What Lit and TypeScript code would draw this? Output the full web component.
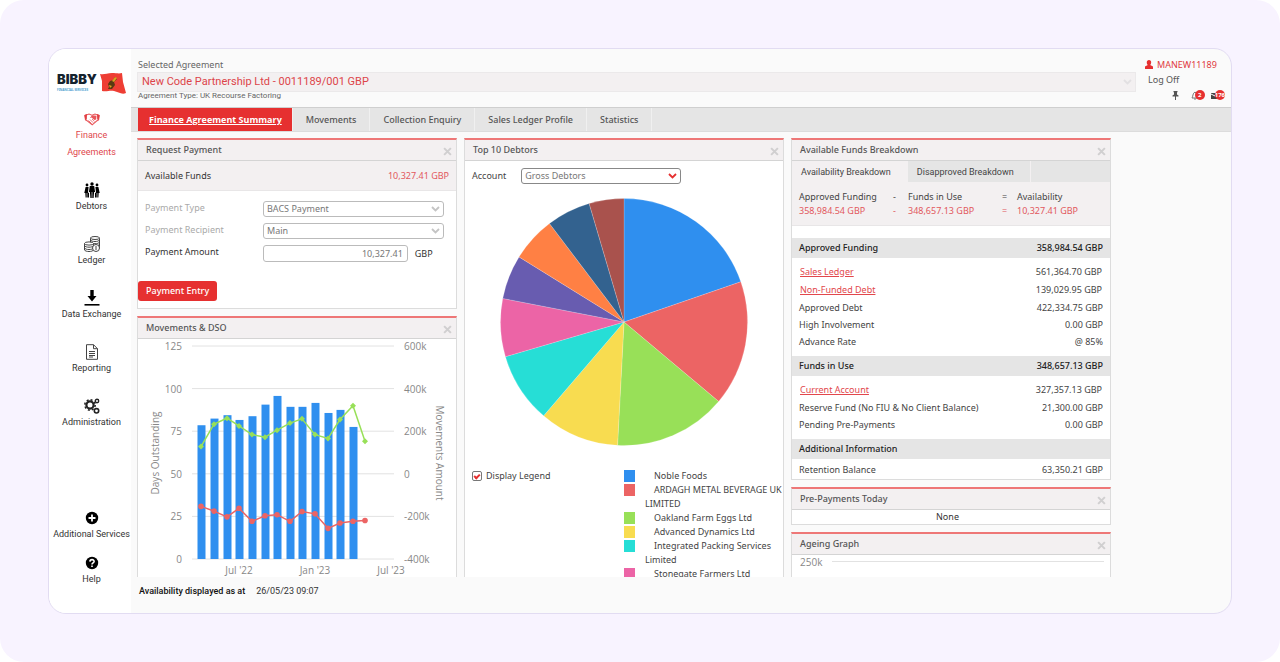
import { html, svg, css, LitElement, nothing } from 'lit'
import { customElement, property, state } from 'lit/decorators.js'
import { classMap } from 'lit/directives/class-map.js'

const icons = {
  handshake: svg`
    <path d="M.8 4.500l4.200-1.500 3 1.200L11 3l4.200 1.500-.6 4.500-2 1-4.400 3.800L3.500 10l-2-1z" fill="#fff" stroke="#e8585c" stroke-width="1.100" />
    <path d="M.5 4l2.500-1-.2 5.400-1.500.6zM15.500 4L13 3l.2 5.400 1.500.6z" fill="#e23f43" />
    <path d="M8 4.200l4.500.6-.3 3.600-1.700.6-3-2.600-1.800.8z" fill="#e8585c" />
    <path d="M4.500 9.500l3 3M6 8.500l3.200 3.200M8 8l2.500 2.300" fill="none" stroke="#e8585c" stroke-width=".8" />`,
  people: svg`
    <circle cx="3" cy="3" r="1.400" /><circle cx="8" cy="2" r="1.700" /><circle cx="13" cy="3" r="1.400" />
    <path d="M5.800 4h4.400l.9 6h-1l-.5 6H8.300V10h-.6v6H6.400l-.5-6h-1z" />
    <path d="M1.600 5h3L4 10.500l1 .5v4.500H3.300V11h-.6v4.500H1.600L1.300 11H.3z" />
    <path d="M14.400 5h-3l.6 5.500-1 .5v4.500h1.700V11h.6v4.500h1.100l.3-4.500h1z" />`,
  coins: svg`
    <g fill="#fff" stroke="#444" stroke-width="1">
      <path d="M6.500 2v10h9V2z" />
      <ellipse cx="11" cy="2" rx="4.500" ry="1.500" />
      <path d="M6.500 4c1 2 8 2 9 0M6.500 6.200c1 2 8 2 9 0M6.500 8.400c1 2 8 2 9 0" fill="none" />
      <path d="M.5 7.500V14c1 2 8 2 9 0V7.500z" />
      <ellipse cx="5" cy="7.500" rx="4.500" ry="1.600" />
      <path d="M.5 9.700c1 2 8 2 9 0M.5 12c1 2 8 2 9 0" fill="none" />
      <circle cx="12" cy="12" r="3.500" />
      <path d="M12 10v4" />
    </g>`,
  download: svg`<path d="M6.300 0h3.400v6H12.500L8 11.500 3.500 6h2.800z" /><path d="M.5 14h15v1.600H.5z" />`,
  report: svg`
    <path d="M2.500.7h7l4 4v10.600h-11zM9.500.7v4h4M5 7.500h6M5 9.500h6M5 11.500h6M5 13h4" fill="none" stroke="#444" />`,
  gears: svg`
    <g fill="none" stroke="#222">
      <circle cx="6" cy="7" r="3.600" stroke-width="2.200" />
      <circle cx="6" cy="7" r="5.200" stroke-width="1.500" stroke-dasharray="2 2.080" />
      <circle cx="13" cy="3" r="1.700" stroke-width="1.400" />
      <circle cx="12.500" cy="12.800" r="2.200" stroke-width="1.600" />
    </g>`,
  plus: svg`<circle cx="8" cy="8" r="6.200" /><path d="M8 4.500v7M4.500 8h7" stroke="#fff" stroke-width="1.800" />`,
  help: svg`
    <circle cx="8" cy="8" r="6.200" />
    <path d="M5.900 6.600C6 4 10.200 4 10.100 6.500 10 8 8 7.900 8 9.600" fill="none" stroke="#fff" stroke-width="1.600" />
    <path d="M7.200 10.600h1.600v1.500H7.200z" fill="#fff" />`
}

const mainNav = [
  { label: 'Finance Agreements', icon: icons.handshake, active: true },
  { label: 'Debtors', icon: icons.people },
  { label: 'Ledger', icon: icons.coins },
  { label: 'Data Exchange', icon: icons.download },
  { label: 'Reporting', icon: icons.report },
  { label: 'Administration', icon: icons.gears }
]

const extraNav = [
  { label: 'Additional Services', icon: icons.plus },
  { label: 'Help', icon: icons.help }
]

const tabs = ['Finance Agreement Summary', 'Movements', 'Collection Enquiry', 'Sales Ledger Profile', 'Statistics']

// end = clockwise angle where the slice stops
const debtors = [
  { name: 'Noble Foods', color: '#2f8fef', end: 71 },
  { name: 'ARDAGH METAL BEVERAGE UK LIMITED', color: '#ec6464', end: 130 },
  { name: 'Oakland Farm Eggs Ltd', color: '#98e058', end: 183 },
  { name: 'Advanced Dynamics Ltd', color: '#f8dc50', end: 220.6 },
  { name: 'Integrated Packing Services Limited', color: '#26ded6', end: 253.7 },
  { name: 'Stonegate Farmers Ltd', color: '#ec64a6', end: 281 },
  { name: '', color: '#685cb0', end: 301.8 },
  { name: '', color: '#ff8044', end: 322.9 },
  { name: '', color: '#33628f', end: 343.6 },
  { name: '', color: '#a9524d', end: 360 }
]

const months = [63, 76, 89, 101, 114, 127, 139, 152, 164, 177, 190, 202, 215, 227]
const days = [78.5, 82.4, 84.4, 81.6, 83.8, 90.6, 95.7, 89.3, 89.3, 91.6, 85.7, 87.5, 77.5]
const credits = [128, 233, 261, 225, 184, 172, 205, 238, 258, 184, 166, 255, 320, 153]
const debits = [-153, -175, -202, -162, -223, -197, -192, -223, -177, -188, -256, -231, -223, -219]

const breakdown = [
  {
    title: 'Approved Funding',
    total: '358,984.54 GBP',
    rows: [
      { label: 'Sales Ledger', value: '561,364.70 GBP', link: true },
      { label: 'Non-Funded Debt', value: '139,029.95 GBP', link: true },
      { label: 'Approved Debt', value: '422,334.75 GBP' },
      { label: 'High Involvement', value: '0.00 GBP' },
      { label: 'Advance Rate', value: '@ 85%' }
    ]
  },
  {
    title: 'Funds in Use',
    total: '348,657.13 GBP',
    rows: [
      { label: 'Current Account', value: '327,357.13 GBP', link: true },
      { label: 'Reserve Fund (No FIU & No Client Balance)', value: '21,300.00 GBP' },
      { label: 'Pending Pre-Payments', value: '0.00 GBP' }
    ]
  },
  {
    title: 'Additional Information',
    total: '',
    rows: [{ label: 'Retention Balance', value: '63,350.21 GBP' }]
  }
]

const chevron = html`
  <svg class="chevron" viewBox="0 0 9 6" aria-hidden="true">
    <path d="M1 1l3.500 3.500L8 1" fill="none" stroke="currentColor" stroke-width="1.800" />
  </svg>`

const selectStyles = css`
  .select {
    position: relative;
    display: block;
    color: #c4c4c4;
  }

  .select select {
    display: block;
    appearance: none;
    box-sizing: border-box;
    width: 100%;
    height: 16px;
    margin: 0;
    padding: 0 20px 0 3px;
    border: 1px solid #bbb;
    border-radius: 3px;
    background: #fff;
    color: #777;
    font: inherit;
    line-height: 14px;
  }

  .chevron {
    position: absolute;
    right: 4px;
    top: 5px;
    width: 9px;
    height: 6px;
    pointer-events: none;
  }
`

@customElement('dash-panel')
export class DashPanel extends LitElement {
  @property() heading = ''

  render () {
    return html`
      <section class="panel">
        <header class="panel__head">
          <h2 class="panel__title">${this.heading}</h2>
          <button class="panel__close" aria-label="Close ${this.heading}">
            <svg viewBox="0 0 8 8" width="9" height="9">
              <path d="M1 1l6 6M7 1L1 7" stroke="#d0cfd0" stroke-width="1.800" />
            </svg>
          </button>
        </header>
        <slot></slot>
      </section>
    `
  }

  static styles = css`
    :host {
      display: block;
    }

    .panel {
      background: #fff;
      border: 1px solid #dcdcdc;
      border-top: 2px solid #ee7777;
    }

    .panel__head {
      display: flex;
      justify-content: space-between;
      align-items: center;
      height: 20px;
      padding: 0 4px 0 8px;
      background: #f3f0f1;
      border-bottom: 1px solid #d4d4d4;
    }

    .panel__title {
      margin: 0;
      font-size: 9px;
      font-weight: 500;
      color: #555;
    }

    .panel__close {
      display: flex;
      padding: 2px 0 0;
      border: 0;
      background: none;
      cursor: pointer;
    }
  `
}

@customElement('side-nav')
export class SideNav extends LitElement {
  renderItem (item: any) {
    return html`
      <li>
        <a href="#" class=${classMap({ nav__a: true, 'nav__a--active': !!item.active })}>
          <svg class="nav__icon" viewBox="0 0 16 16" aria-hidden="true">${item.icon}</svg>
          <span class="nav__label">${item.label}</span>
        </a>
      </li>
    `
  }

  render () {
    return html`
      <a class="logo" href="#">
        <span class="logo__text">
          <span class="logo__name">BIBBY</span>
          <span class="logo__sub">FINANCIAL SERVICES</span>
        </span>
        <svg class="logo__flag" viewBox="0 0 28 24" aria-hidden="true">
          <path d="M1 3c4 1 7-1 12-1 4 0 7 1 10 0l1 9 3 11c-4 2-8-1-12-2-4-1-7 1-12 0L3 10z" fill="#ee3e34" />
          <path d="M16 6l2 2-3 3 1 3-3 4H9l1-2-1-3 2-3 3-1z" fill="#5a3a12" />
          <path d="M16 6l2 1-3 4-2-1zM10 14l3 1-2 2z" fill="#d9a520" />
        </svg>
      </a>
      <nav class="nav" aria-label="Main">
        <ul class="nav__ul">${mainNav.map(i => this.renderItem(i))}</ul>
        <ul class="nav__ul nav__ul--extra">${extraNav.map(i => this.renderItem(i))}</ul>
      </nav>
    `
  }

  static styles = css`
    :host {
      display: flex;
      flex-direction: column;
      box-sizing: border-box;
      padding: 22px 0 25px;
      background: #fff;
      font-family: Roboto, "Noto Sans", sans-serif;
    }

    .logo {
      display: flex;
      gap: 2px;
      padding-left: 8px;
      margin-bottom: 16px;
      text-decoration: none;
    }

    .logo__text {
      display: flex;
      flex-direction: column;
      width: 40px;
    }

    .logo__name {
      font: 900 13px/17px Inter, sans-serif;
      color: #14222e;
    }

    .logo__sub {
      font: 700 3px/4px "Noto Sans", sans-serif;
      color: #4c9fd0;
    }

    .logo__flag {
      width: 28px;
      height: 24px;
    }

    .nav {
      flex: 1;
      display: flex;
      flex-direction: column;
      justify-content: space-between;
    }

    .nav__ul {
      display: flex;
      flex-direction: column;
      gap: 21px;
      margin: 0;
      padding: 0;
      list-style: none;
    }

    .nav__ul--extra {
      gap: 12px;
    }

    .nav__a {
      display: flex;
      flex-direction: column;
      align-items: center;
      padding-left: 3px;
      color: #333;
      text-decoration: none;
    }

    .nav__a--active {
      color: #e0474c;
    }

    .nav__icon {
      width: 16px;
      height: 16px;
    }

    .nav__label {
      line-height: 17px;
      text-align: center;
    }

    .nav__a--active .nav__label {
      max-width: 60px;
    }
  `
}

@customElement('movements-chart')
export class MovementsChart extends LitElement {
  static top = 7
  static height = 213

  dayY (v: number) {
    return MovementsChart.top + MovementsChart.height * (1 - v / 125)
  }

  amountY (v: number) {
    return MovementsChart.top + MovementsChart.height * (1 - (v + 400) / 1000)
  }

  points (values: number[]) {
    return values.map((v, i) => `${months[i]},${this.amountY(v)}`).join(' ')
  }

  render () {
    return html`
      <svg class="chart" viewBox="0 0 318 250" role="img" aria-label="Movements and DSO">
        ${[125, 100, 75, 50, 25, 0].map(v => svg`
          <path class="grid" d="M54 ${this.dayY(v)}H256" />
          <text x="44" y=${this.dayY(v) + 4} text-anchor="end">${v}</text>`)}
        ${[600, 400, 200, 0, -200, -400].map(v => svg`
          <text x="266" y=${this.amountY(v) + 4}>${v === 0 ? '0' : `${v}k`}</text>`)}
        ${days.map((v, i) => svg`
          <rect x=${months[i] - 3.5} y=${this.dayY(v)} width="8" height=${this.dayY(0) - this.dayY(v)} fill="#2f8fef" />`)}
        <polyline points=${this.points(credits)} stroke="#98e058" />
        ${credits.map((v, i) => svg`
          <path transform="translate(${months[i]} ${this.amountY(v)})" d="M0-3l3 3-3 3-3-3z" fill="#98e058" />`)}
        <polyline points=${this.points(debits)} stroke="#ec6464" />
        ${debits.map((v, i) => svg`
          <circle cx=${months[i]} cy=${this.amountY(v)} r="2.800" fill="#ec6464" />`)}
        <text x="101" y="235" text-anchor="middle">Jul '22</text>
        <text x="177" y="235" text-anchor="middle">Jan '23</text>
        <text x="253" y="235" text-anchor="middle">Jul '23</text>
        <text transform="translate(21 114) rotate(-90)" text-anchor="middle">Days Outstanding</text>
        <text transform="translate(298 114) rotate(90)" text-anchor="middle">Movements Amount</text>
      </svg>
    `
  }

  static styles = css`
    :host {
      display: block;
    }

    .chart {
      display: block;
      width: 100%;
    }

    .grid {
      stroke: #e2e2e2;
    }

    polyline {
      fill: none;
      stroke-width: 1.5;
    }

    text {
      font-family: "Open Sans", "Noto Sans", sans-serif;
      font-size: 10px;
      fill: #888;
    }
  `
}

@customElement('debtors-chart')
export class DebtorsChart extends LitElement {
  @state() legend = true

  slice (start: number, end: number) {
    const at = (deg: number) => {
      const a = deg * Math.PI / 180
      return `${124 + 123.5 * Math.sin(a)} ${124 - 123.5 * Math.cos(a)}`
    }
    return `M124 124L${at(start)}A123.5 123.5 0 0 1 ${at(end)}Z`
  }

  render () {
    return html`
      <div class="account">
        <label for="account">Account</label>
        <span class="select select--account">
          <select id="account"><option>Gross Debtors</option></select>
          ${chevron}
        </span>
      </div>
      <svg class="pie" viewBox="0 0 248 248" role="img" aria-label="Top 10 debtors">
        ${debtors.map((d, i) => svg`
          <path d=${this.slice(i ? debtors[i - 1].end : 0, d.end)} fill=${d.color} stroke="#fff" stroke-opacity="0.3" stroke-width="0.6" />`)}
      </svg>
      <div class="bottom">
        <label class="check">
          <input type="checkbox" .checked=${this.legend} @change=${() => { this.legend = !this.legend }}>
          Display Legend
        </label>
        ${this.legend
          ? html`
            <ul class="legend">
              ${debtors.filter(d => d.name).map(d => html`
                <li class="legend__li">
                  <svg class="legend__key" viewBox="0 0 11 12" aria-hidden="true"><rect width="11" height="12" fill=${d.color} /></svg>
                  <span class="legend__name">${d.name}</span>
                </li>`)}
            </ul>`
          : nothing}
      </div>
    `
  }

  static styles = [selectStyles, css`
    :host {
      display: block;
      color: #444;
    }

    .account {
      display: flex;
      align-items: center;
      gap: 15px;
      padding: 7px 7px 14px;
    }

    .select--account {
      width: 160px;
      color: #e63030;
    }

    .select--account select {
      border-color: #888;
    }

    .pie {
      display: block;
      width: 78%;
      margin: 0 auto;
    }

    .bottom {
      display: grid;
      grid-template-columns: 1fr 1fr;
      padding-top: 23px;
    }

    .check {
      display: flex;
      align-items: center;
      gap: 4px;
      height: 14px;
      padding-left: 7px;
    }

    .check input {
      appearance: none;
      box-sizing: border-box;
      width: 10px;
      height: 10px;
      margin: 0;
      border: 1px solid #777;
      border-radius: 2px;
      background: #fff;
      display: grid;
      place-items: center;
    }

    .check input:checked::before {
      content: '';
      box-sizing: border-box;
      width: 6px;
      height: 4px;
      border: solid #e63030;
      border-width: 0 0 2px 2px;
      transform: rotate(-45deg);
    }

    .legend {
      margin: 0;
      padding: 0;
      list-style: none;
      line-height: 14px;
    }

    .legend__li {
      display: flex;
      gap: 10px;
    }

    .legend__key {
      flex: none;
      width: 11px;
      height: 12px;
      margin-top: 1px;
    }

    .legend__name {
      text-indent: 9px;
    }
  `]
}

@customElement('funds-breakdown')
export class FundsBreakdown extends LitElement {
  render () {
    return html`
      <div class="tabs" role="tablist">
        <button class="tabs__b tabs__b--active" role="tab" aria-selected="true">Availability Breakdown</button>
        <button class="tabs__b" role="tab" aria-selected="false">Disapproved Breakdown</button>
        <span class="tabs__rest"></span>
      </div>
      <div class="sum">
        <span>Approved Funding</span><span>-</span><span>Funds in Use</span><span>=</span><span>Availability</span>
        <span class="red">358,984.54 GBP</span><span class="red">-</span><span class="red">348,657.13 GBP</span><span class="red">=</span><span class="red">10,327.41 GBP</span>
      </div>
      ${breakdown.map(b => html`
        <table class="table">
          <thead>
            <tr><th scope="col">${b.title}</th><th scope="col">${b.total}</th></tr>
          </thead>
          <tbody>
            ${b.rows.map(r => html`
              <tr class=${classMap({ linked: !!r.link })}>
                <td>${r.link ? html`<a href="#">${r.label}</a>` : r.label}</td>
                <td>${r.value}</td>
              </tr>`)}
          </tbody>
        </table>`)}
    `
  }

  static styles = css`
    :host {
      display: block;
      color: #444;
    }

    .tabs {
      display: flex;
      background: #e5e5e5;
    }

    .tabs__b {
      padding: 0 16px 0 9px;
      height: 22px;
      border: 0;
      border-bottom: 1px solid #f3f0f1;
      border-right: 1px solid #f3f0f1;
      background: #e5e5e5;
      color: #444;
      font: 9px Roboto, "Noto Sans", sans-serif;
      cursor: pointer;
    }

    .tabs__b--active {
      background: #f3f0f1;
    }

    .tabs__rest {
      flex: 1;
      border-bottom: 1px solid #f3f0f1;
    }

    .sum {
      display: grid;
      grid-template-columns: 94px 15px 94px 15px 1fr;
      line-height: 14px;
      padding: 7px;
      background: #f3f0f1;
      border-bottom: 1px solid #e8e6e7;
      margin-bottom: 12px;
    }

    .red {
      color: #e2585d;
    }

    .table {
      width: 100%;
      border-collapse: collapse;
    }

    .table th {
      height: 20px;
      padding: 0 7px;
      background: #e5e5e5;
      color: #222;
      font-weight: 500;
      text-align: left;
    }

    .table td {
      height: 17px;
      padding: 0 7px;
    }

    .table .linked td {
      height: 18px;
      padding: 0 8px;
    }

    .table th:last-child,
    .table td:last-child {
      text-align: right;
    }

    .table tbody tr:first-child td {
      padding-top: 5px;
    }

    .table tbody tr:last-child td {
      padding-bottom: 6px;
    }

    .table:last-child tbody tr td {
      padding-top: 2px;
      padding-bottom: 1px;
    }

    a {
      color: #e2474c;
    }
  `
}

@customElement('app-root')
export class AppRoot extends LitElement {
  renderHeader () {
    return html`
      <header class="top">
        <div class="top__agreement">
          <label for="agreement">Selected Agreement</label>
          <span class="select select--agreement">
            <select id="agreement"><option>New Code Partnership Ltd - 0011189/001 GBP</option></select>
            ${chevron}
          </span>
          <span class="top__type">Agreement Type: UK Recourse Factoring</span>
        </div>
        <div class="user">
          <a class="user__name" href="#">
            <svg viewBox="0 0 8 9" width="8" height="9" aria-hidden="true">
              <path d="M4 0c3 0 2.500 4 1.200 5L8 6.500V9H0V6.500L2.800 5C1.500 4 1 0 4 0z" fill="#e63030" />
            </svg>
            MANEW11189
          </a>
          <a class="user__off" href="#">Log Off</a>
          <div class="user__tools">
            <button class="tool" aria-label="Pin">
              <svg viewBox="0 0 7 9" width="7" height="9">
                <path d="M1.500 0h4v1L5 1.500V3.500l1.500 1v1H4V9H3V5.500H.5v-1L2 3.500v-2L1.500 1z" fill="#555" />
              </svg>
            </button>
            <button class="tool" aria-label="Notifications">
              <svg viewBox="0 0 8 9" width="8" height="9">
                <path d="M1 7c1-1 .5-5 3-6 2.500 1 2 5 3 6zM3 8h2" fill="none" stroke="#777" />
              </svg>
              <span class="badge">2</span>
            </button>
            <button class="tool" aria-label="Messages">
              <svg viewBox="0 0 8 9" width="8" height="9">
                <path d="M0 2h8v6H0z" fill="#444" /><path d="M0 3l4 2 4-2" fill="none" stroke="#fff" />
              </svg>
              <span class="badge">176</span>
            </button>
          </div>
        </div>
      </header>
    `
  }

  renderRequest () {
    return html`
      <dash-panel heading="Request Payment">
        <div class="funds"><span>Available Funds</span><span class="funds__v">10,327.41 GBP</span></div>
        <form class="form" @submit=${(e: Event) => e.preventDefault()}>
          <label class="form__muted" for="type">Payment Type</label>
          <span class="select"><select id="type"><option>BACS Payment</option></select>${chevron}</span>
          <label class="form__muted" for="recipient">Payment Recipient</label>
          <span class="select"><select id="recipient"><option>Main</option></select>${chevron}</span>
          <label for="amount">Payment Amount</label>
          <span class="form__amount"><input id="amount" value="10,327.41"><span>GBP</span></span>
          <button class="form__btn">Payment Entry</button>
        </form>
      </dash-panel>
    `
  }

  render () {
    return html`
      <div class="page">
        <div class="frame">
          <side-nav></side-nav>
          <main class="main">
            ${this.renderHeader()}
            <nav class="tabs" aria-label="Agreement">
              ${tabs.map((t, i) => html`
                <a href="#" class=${classMap({ tabs__a: true, 'tabs__a--active': i === 0 })}>${t}</a>`)}
            </nav>
            <div class="board">
              <div class="col">
                ${this.renderRequest()}
                <dash-panel heading="Movements & DSO"><movements-chart></movements-chart></dash-panel>
              </div>
              <div class="col">
                <dash-panel heading="Top 10 Debtors"><debtors-chart></debtors-chart></dash-panel>
              </div>
              <div class="col">
                <dash-panel heading="Available Funds Breakdown"><funds-breakdown></funds-breakdown></dash-panel>
                <dash-panel heading="Pre-Payments Today"><p class="none">None</p></dash-panel>
                <dash-panel heading="Ageing Graph">
                  <div class="ageing"><span>250k</span><span class="ageing__line"></span></div>
                </dash-panel>
              </div>
            </div>
            <footer class="foot"><span class="foot__t">Availability displayed as at</span><span>26/05/23 09:07</span></footer>
          </main>
        </div>
      </div>
    `
  }

  static styles = [selectStyles, css`
    :host {
      display: block;
      background: #fff;
      font: 9px/14px "Noto Sans", "Open Sans", sans-serif;
      color: #333;
    }

    .page {
      box-sizing: border-box;
      height: 100vh;
      padding: 48px;
      border-radius: 24px;
      background: #f8f3ff;
    }

    .frame {
      display: grid;
      grid-template-columns: 82px 1fr;
      box-sizing: border-box;
      height: 100%;
      overflow: hidden;
      border: 1px solid #e2dcf2;
      border-radius: 18px;
      background: #fafafa;
    }

    .main {
      display: flex;
      flex-direction: column;
      min-width: 0;
      min-height: 0;
    }

    .top {
      display: flex;
      gap: 9px;
      height: 58px;
      padding: 0 4px 0 6px;
    }

    .top__agreement {
      flex: 1;
      padding-top: 9px;
      color: #666;
    }

    .top__agreement label {
      display: block;
      padding-left: 1px;
    }

    .select--agreement {
      color: #e2e0e2;
    }

    .select--agreement select {
      height: 20px;
      padding-left: 4px;
      border: 1px solid #ebe9ea;
      border-radius: 0;
      background: #f3f0f1;
      color: #dd4449;
      font: 11px/18px Roboto, "Noto Sans", sans-serif;
    }

    .select--agreement .chevron {
      top: 7px;
    }

    .top__type {
      display: block;
      padding-left: 1px;
      font: 8px/8px Roboto, "Noto Sans", sans-serif;
    }

    .user {
      display: flex;
      flex-direction: column;
      width: 82px;
      padding-top: 8px;
      line-height: 15px;
    }

    .user a {
      text-decoration: none;
    }

    .user__name {
      display: flex;
      align-items: center;
      gap: 4px;
      color: #e0393e;
    }

    .user__off {
      padding-left: 3px;
      color: #555;
    }

    .user__tools {
      display: flex;
      justify-content: flex-end;
      align-items: center;
      gap: 6px;
      height: 16px;
      padding-right: 2px;
    }

    .tool {
      display: flex;
      align-items: center;
      padding: 0;
      border: 0;
      background: none;
    }

    .tool:first-child {
      margin-right: 6px;
    }

    .badge {
      min-width: 10px;
      height: 10px;
      margin-left: -4px;
      border-radius: 5px;
      background: #e63030;
      color: #fff;
      font: 700 6px/10px "Noto Sans", sans-serif;
      text-align: center;
    }

    .tabs {
      display: flex;
      height: 23px;
      padding-left: 7px;
      border-top: 1px solid #cfcfcf;
      border-bottom: 1px solid #dcdcdc;
      background: #e5e5e5;
    }

    .tabs__a {
      padding: 0 13px;
      border-right: 1px solid #f0f0f0;
      color: #555;
      font-weight: 500;
      line-height: 23px;
      text-decoration: none;
    }

    .tabs__a--active {
      padding: 0 10px 0 11px;
      background: #e63030;
      color: #fff;
      font-family: "Open Sans", "Noto Sans", sans-serif;
      font-weight: 700;
      text-decoration: underline;
    }

    .board {
      flex: 1;
      display: grid;
      grid-template-columns: repeat(3, 1fr);
      gap: 7px;
      min-height: 0;
      overflow: hidden;
      padding: 6px 120px 0 6px;
    }

    .col {
      display: flex;
      flex-direction: column;
      gap: 7px;
      min-width: 0;
    }

    .funds {
      display: flex;
      justify-content: space-between;
      padding: 7px;
      line-height: 15px;
      background: #f3f0f1;
      border-bottom: 1px solid #e8e6e7;
    }

    .funds__v {
      color: #e2585d;
    }

    .form {
      display: grid;
      grid-template-columns: 118px 1fr;
      row-gap: 6px;
      padding: 10px 12px 7px 7px;
    }

    .form__muted {
      color: #aaa;
    }

    .form__amount {
      display: flex;
      align-items: center;
      gap: 7px;
    }

    .form__amount input {
      box-sizing: border-box;
      width: 80%;
      height: 17px;
      padding: 0 4px;
      border: 1px solid #bbb;
      border-radius: 3px;
      color: #777;
      font: inherit;
      text-align: right;
    }

    .form__btn {
      grid-column: 1 / -1;
      justify-self: start;
      height: 20px;
      margin: 13px 0 0 -7px;
      padding: 0 8px;
      border: 0;
      border-radius: 3px;
      background: #e63030;
      color: #fff;
      font: inherit;
      font-weight: 500;
      cursor: pointer;
    }

    .none {
      margin: 0;
      padding-right: 7px;
      text-align: center;
    }

    .ageing {
      display: flex;
      align-items: flex-start;
      gap: 10px;
      height: 200px;
      padding: 0 6px 0 8px;
      color: #888;
      font-family: "Open Sans", "Noto Sans", sans-serif;
      font-size: 10px;
    }

    .ageing__line {
      flex: 1;
      height: 1px;
      margin-top: 6px;
      background: #e2e2e2;
    }

    .foot {
      display: flex;
      gap: 11px;
      padding: 7px 8px 15px;
      font-family: Roboto, "Noto Sans", sans-serif;
    }

    .foot__t {
      font-weight: 500;
      color: #111;
    }
  `]
}
